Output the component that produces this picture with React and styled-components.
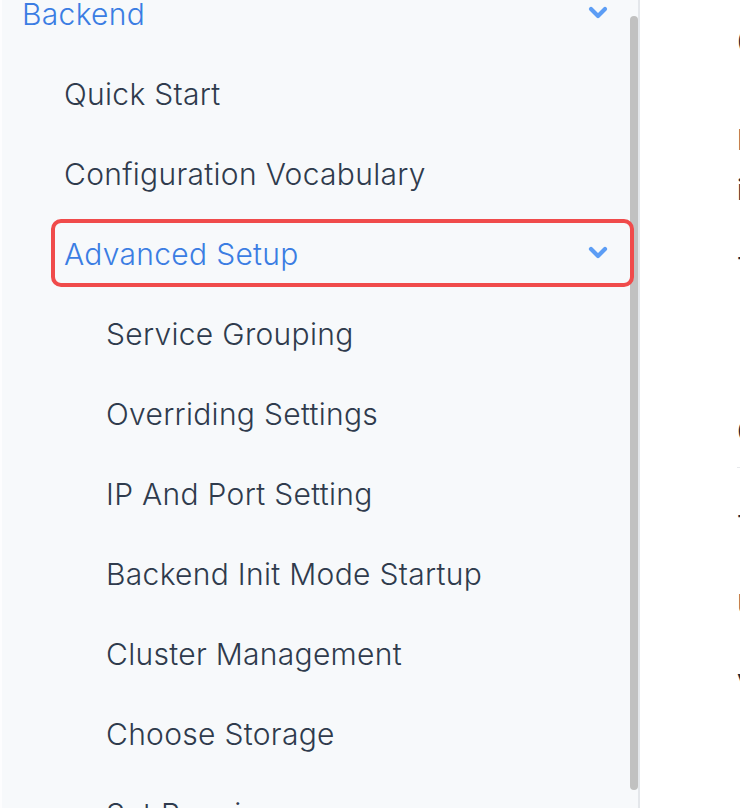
import React from 'react';
import styled, { createGlobalStyle } from 'styled-components';

const GlobalStyle = createGlobalStyle`
  html, body {
    margin: 0;
    padding: 0;
    background: #ffffff;
    font-family: Inter, "Noto Sans", "Liberation Sans", sans-serif;
  }
  * { box-sizing: border-box; }
`;

const Page = styled.div`
  display: flex;
  width: 740px;
  height: 808px;
  overflow: hidden;
`;

const Sidebar = styled.nav`
  position: relative;
  flex: none;
  width: 640px;
  height: 100%;
  overflow: hidden;
  background: #f7f9fb;
  border-left: 2px solid #fdfdfe;
  border-right: 2px solid #e4e7eb;
`;

const ScrollThumb = styled.div`
  position: absolute;
  top: 16px;
  bottom: 18px;
  right: 0;
  width: 8px;
  border-radius: 4px;
  background: #c1c1c1;
`;

const MenuList = styled.ul`
  list-style: none;
  margin: ${p => (p.$root ? '-21px 0 0' : '0')};
  padding: 0 0 0 ${p => (p.$root ? '7px' : '42px')};
`;

const Row = styled.a`
  position: relative;
  z-index: 1;
  display: flex;
  align-items: center;
  justify-content: space-between;
  height: 68px;
  margin: 0 4px 12px 0;
  padding: 2px 22px 0 9px;
  border: 4px solid ${p => (p.$outlined ? '#f04b4b' : 'transparent')};
  border-radius: 10px;
  font-size: 30px;
  font-weight: 350;
  letter-spacing: 0.3px;
  white-space: nowrap;
  color: ${p => (p.$active ? '#3b7de3' : '#2f3b4d')};
  text-decoration: none;
`;

const Chevron = styled.svg`
  flex: none;
  width: 20px;
  height: 13px;
  margin-top: -4px;
`;

const ChevronDown = () => (
  <Chevron viewBox="0 0 20 13" fill="none">
    <path
      d="M3 3 L10 10 L17 3"
      stroke="#5c9df5"
      strokeWidth="4.2"
      strokeLinecap="round"
      strokeLinejoin="round"
    />
  </Chevron>
);

const Main = styled.main`
  flex: 1;
  min-width: 0;
  overflow: hidden;
  padding: 14px 0 0 97px;
  color: #1f2937;
  white-space: nowrap;
`;

const Title = styled.h1`
  margin: 0;
  font-size: 42px;
  font-weight: 700;
  line-height: 56px;
`;

const Heading = styled.h2`
  margin: ${p => p.$mt}px 0 0;
  padding-bottom: 12px;
  border-bottom: 1px solid #e7e9ec;
  font-size: 36px;
  font-weight: 600;
  line-height: 48px;
`;

const Para = styled.p`
  margin: ${p => p.$mt}px 0 0;
  font-size: 28px;
  line-height: 50px;
`;

const Line = styled.span`
  display: block;
`;

const menu = [
  {
    label: 'Backend',
    active: true,
    open: true,
    children: [
      { label: 'Quick Start' },
      { label: 'Configuration Vocabulary' },
      {
        label: 'Advanced Setup',
        active: true,
        open: true,
        outlined: true,
        children: [
          { label: 'Service Grouping' },
          { label: 'Overriding Settings' },
          { label: 'IP And Port Setting' },
          { label: 'Backend Init Mode Startup' },
          { label: 'Cluster Management' },
          { label: 'Choose Storage' },
          { label: 'Set Running' },
        ],
      },
    ],
  },
];

const MenuItems = ({ items, root }) => (
  <MenuList $root={root}>
    {items.map(item => (
      <li key={item.label}>
        <Row href="#" $active={item.active} $outlined={item.outlined}>
          {item.label}
          {item.open && <ChevronDown />}
        </Row>
        {item.children && <MenuItems items={item.children} />}
      </li>
    ))}
  </MenuList>
);

const App = () => {
  return (
    <>
      <GlobalStyle />
      <Page>
        <Sidebar>
          <ScrollThumb />
          <MenuItems items={menu} root />
        </Sidebar>

        <Main>
          <Title>Cluster Overview</Title>
          <Para $mt={45}>
            <Line>In this section the backend is configured</Line>
            <Line>in advanced mode.</Line>
          </Para>
          <Para $mt={28}>
            <Line>The settings below apply to every node.</Line>
          </Para>
          <Heading $mt={114}>Configuration</Heading>
          <Para $mt={33}>
            <Line>The configuration file is read at startup.</Line>
          </Para>
          <Para $mt={29}>
            <Line>Use the options to override defaults.</Line>
          </Para>
          <Para $mt={30}>
            <Line>Values are validated on load.</Line>
          </Para>
        </Main>
      </Page>
    </>
  );
};

export default App;
